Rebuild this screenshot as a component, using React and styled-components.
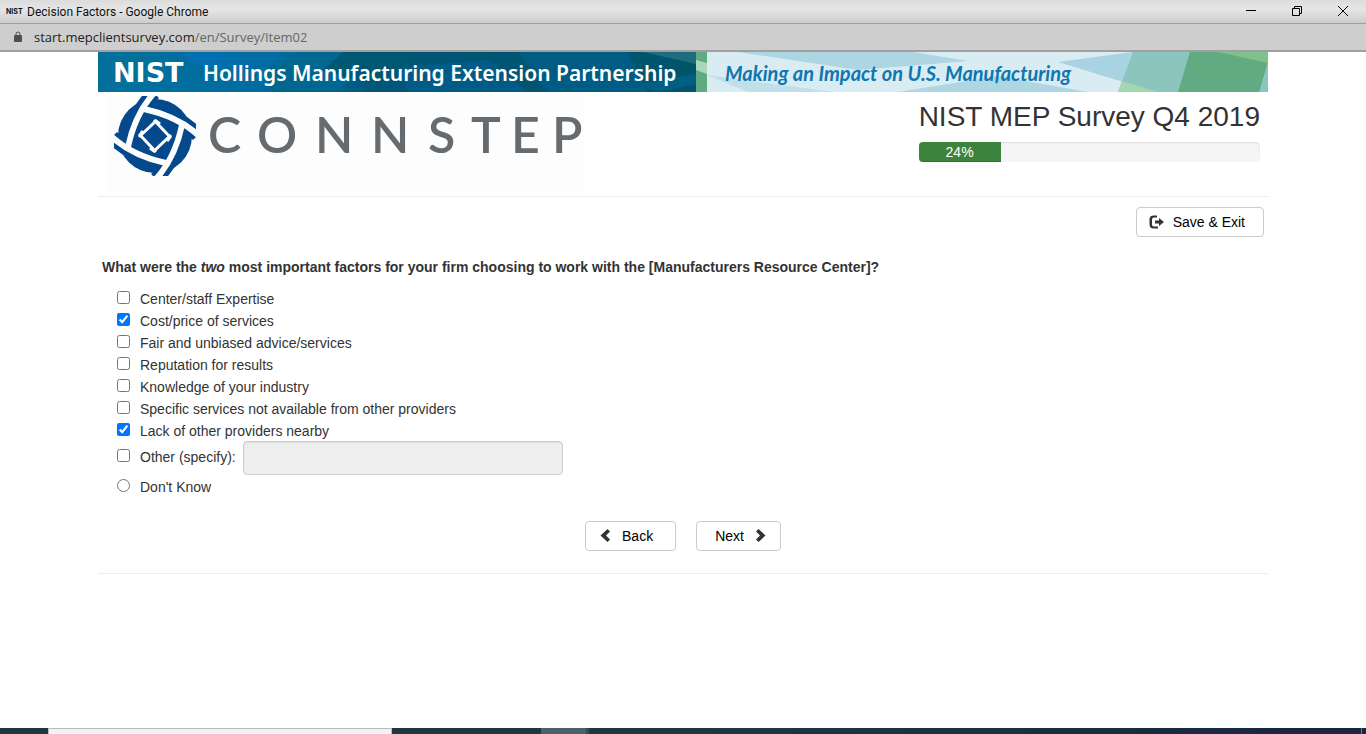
import { useState } from "react";
import styled, { createGlobalStyle } from "styled-components";

const GlobalStyle = createGlobalStyle`
  * {
    box-sizing: border-box;
  }

  body {
    margin: 0;
    background-color: #fff;
    color: #333;
    font-family: "Liberation Sans", Arial, sans-serif;
    font-size: 14px;
    line-height: 20px;
  }
`;

const Window = styled.div`
  min-height: 100vh;
  display: flex;
  flex-direction: column;
`;

const TitleBar = styled.header`
  display: flex;
  align-items: center;
  height: 24px;
  padding: 0 17px 0 6px;
  background: linear-gradient(#dcdcdc, #e6e6e6 40%, #cbcccd);
  border-bottom: 1px solid #9d9d9d;
  color: #111;
  font-family: "Roboto", "Noto Sans", sans-serif;
  font-size: 12px;
`;

const Favicon = styled.span`
  width: 21px;
  font-family: "Inter", sans-serif;
  font-size: 7px;
  font-weight: 700;
`;

const WindowControls = styled.div`
  display: flex;
  gap: 34px;
  margin-left: auto;
`;

const ControlButton = styled.button`
  display: flex;
  padding: 0;
  border: none;
  background: none;
`;

const AddressBar = styled.div`
  display: flex;
  align-items: center;
  gap: 11px;
  height: 28px;
  padding: 0 13px;
  background-color: #cecece;
  border-bottom: 2px solid #a0a0a0;
  color: #222;
  font-family: "Open Sans", "Noto Sans", sans-serif;
  font-size: 13px;
`;

const Path = styled.span`
  color: #666;
`;

const Page = styled.main`
  flex: 1;
  width: 100%;
  max-width: 1170px;
  margin: 0 auto;
`;

const Banner = styled.div`
  display: grid;
  height: 40px;

  & > * {
    grid-area: 1 / 1;
  }
`;

const BannerArt = styled.svg`
  width: 100%;
  height: 40px;
`;

const BannerText = styled.div`
  display: flex;
  align-items: center;
  height: 42px;
  padding-left: 15px;
  color: #fff;
  white-space: nowrap;
`;

const NistMark = styled.strong`
  width: 90px;
  font-family: "DejaVu Sans", sans-serif;
  font-size: 27px;
`;

const Program = styled.span`
  width: 522px;
  font-family: "Noto Sans", "Open Sans", sans-serif;
  font-size: 21px;
  font-weight: 600;
`;

const Slogan = styled.em`
  color: #0e76b0;
  font-family: "Lato", sans-serif;
  font-size: 20px;
  font-weight: 700;
`;

const Header = styled.div`
  display: flex;
  justify-content: space-between;
  align-items: flex-start;
  padding: 4px 8px;
  border-bottom: 1px solid #eee;
`;

const Logo = styled.svg`
  display: block;
  background-color: #fdfdfd;
`;

const Summary = styled.div`
  padding-top: 5px;
`;

const Title = styled.h1`
  margin: 0 0 9px;
  font-size: 28px;
  font-weight: 400;
  line-height: 32px;
`;

const Progress = styled.div`
  height: 20px;
  overflow: hidden;
  border-radius: 4px;
  background-color: #f5f5f5;
  box-shadow: inset 0 1px 2px rgba(0, 0, 0, 0.1);
`;

const ProgressBar = styled.div`
  height: 100%;
  background-color: #3c833e;
  box-shadow: inset 0 -1px 0 rgba(0, 0, 0, 0.15);
  color: #fff;
  text-align: center;
`;

const Toolbar = styled.div`
  display: flex;
  justify-content: flex-end;
  padding: 10px 4px 20px;
`;

const Button = styled.button`
  display: flex;
  align-items: center;
  gap: ${(props) => props.$gap || 12}px;
  height: 30px;
  padding: ${(props) => props.$padding};
  border: 1px solid #ccc;
  border-radius: 4px;
  background-color: #fff;
  color: #000;
  font-family: inherit;
  font-size: 14px;
  line-height: 20px;

  svg {
    fill: #333;
  }
`;

const Question = styled.fieldset`
  margin: 0;
  padding: 0 4px;
  border: none;
`;

const Legend = styled.legend`
  padding: 0;
  margin-bottom: 10px;
  font-weight: 700;
`;

const Options = styled.div`
  padding-left: 15px;
`;

const Option = styled.label`
  display: flex;
  align-items: flex-start;
  gap: 10px;
  line-height: 22px;
  padding-top: 1px;
  margin-bottom: -1px;

  input {
    width: 13px;
    height: 13px;
    margin: 3px 0 0;
  }
`;

const OtherRow = styled.div`
  display: flex;
  align-items: flex-start;
  gap: 7px;

  ${Option} {
    margin-top: 4px;
  }
`;

const TextInput = styled.input`
  width: 320px;
  height: 34px;
  padding: 6px 12px;
  border: 1px solid #ccc;
  border-radius: 4px;
  background-color: #eee;
  box-shadow: inset 0 1px 1px rgba(0, 0, 0, 0.075);
  font: inherit;
`;

const Pager = styled.div`
  display: flex;
  justify-content: center;
  gap: 20px;
  padding: 24px 0 22px;
  border-bottom: 1px solid #eee;
`;

const Taskbar = styled.footer`
  display: flex;
  height: 6px;
  padding-left: 48px;
  background: linear-gradient(90deg, #20373f 50%, #1a2640 95%);
`;

const SearchBox = styled.div`
  width: 344px;
  margin-right: 149px;
  border: 1px solid #bbb;
  border-bottom: none;
  background-color: #f2f2f2;
`;

const ActiveTask = styled.div`
  width: 48px;
  background-color: #4e5f67;
  border-right: 3px solid #3a4a52;
`;

const ShowDesktop = styled.div`
  width: 5px;
  margin-left: auto;
  border-left: 1px solid #6d7888;
`;

const factors = [
  "Center/staff Expertise",
  "Cost/price of services",
  "Fair and unbiased advice/services",
  "Reputation for results",
  "Knowledge of your industry",
  "Specific services not available from other providers",
  "Lack of other providers nearby",
];

function BannerBackground() {
  return (
    <BannerArt viewBox="0 0 1170 40" preserveAspectRatio="none" aria-hidden>
      <defs>
        <linearGradient id="deep">
          <stop offset="0" stopColor="#04709a" />
          <stop offset="0.25" stopColor="#006da0" />
          <stop offset="0.5" stopColor="#005578" />
          <stop offset="1" stopColor="#00546a" />
        </linearGradient>
        <linearGradient id="glow">
          <stop offset="0" stopColor="#0071b5" />
          <stop offset="1" stopColor="#006a9c" />
        </linearGradient>
      </defs>
      <rect width="598" height="40" fill="url(#deep)" />
      <path d="M85 0H200L150 25 95 12z" fill="url(#glow)" />
      <path d="M205 0H300L235 40H175L165 18z" fill="#006791" />
      <path d="M245 0H330L265 40H300L225 18z" fill="#005772" />
      <path d="M300 15L390 8 430 40H310z" fill="#005c86" />
      <path d="M420 0H530L550 40H450z" fill="#005b85" />
      <path d="M545 0H598V12z" fill="#1f6c80" />
      <path d="M540 32L598 22V32L560 40z" fill="#006084" />
      <rect x="598" width="11" height="40" fill="#5faa82" />
      <path d="M598 8L609 11V22L598 18z" fill="#a9d8b9" />
      <rect x="609" width="561" height="40" fill="#d9ecf2" />
      <path d="M640 0H815L870 9 760 18z" fill="#aed5e2" />
      <path d="M609 23L735 40H650z" fill="#c1dfe9" />
      <path d="M800 40L900 24 990 40z" fill="#afd6e3" />
      <path d="M960 10L1035 0V33z" fill="#a9d2e2" />
      <path d="M1035 0H1095L1081 40H1020z" fill="#8cc5bd" />
      <path d="M1024 29L1060 40H1020z" fill="#a4d6b4" />
      <path d="M1092 0H1170V12L1162 40H1080z" fill="#61aa82" />
      <path d="M1120 0H1170V11z" fill="#7fc08d" />
      <path d="M1170 10V40H1161z" fill="#8cc5bd" />
    </BannerArt>
  );
}

function ConnstepLogo() {
  const turns = [0, 90, 180, 270];
  return (
    <Logo width="479" height="96" viewBox="0 0 479 96">
      <svg x="8" width="82" height="80" viewBox="-41 -40 82 80">
        <circle r="37" fill="#04498c" />
        {turns.map((turn) => (
          <path
            key={turn}
            d="M-1 -43Q-12 -32 -19 -18"
            transform={`rotate(${turn})`}
            fill="none"
            stroke="#04498c"
            strokeWidth="14"
          />
        ))}
        {turns.map((turn) => (
          <g
            key={turn}
            transform={`rotate(${turn})`}
            fill="none"
            stroke="#fdfdfd"
          >
            <path d="M-1 -43Q-20 -22 -27 11" strokeWidth="6" />
            <path d="M-16 1L1 -15L5 -12" strokeWidth="3" />
          </g>
        ))}
      </svg>
      <text
        x="102 151 209 265 322 365 405 446"
        y="57"
        fill="#666b6f"
        fontFamily="Lato, sans-serif"
        fontSize="50"
        fontWeight="600"
      >
        CONNSTEP
      </text>
    </Logo>
  );
}

function App() {
  const [checked, setChecked] = useState([1, 6]);
  const [other, setOther] = useState(false);
  const percent = 24;

  function toggle(index) {
    setChecked((current) =>
      current.includes(index)
        ? current.filter((item) => item !== index)
        : [...current, index]
    );
  }

  return (
    <>
      <GlobalStyle />
      <Window>
        <TitleBar>
          <Favicon>NIST</Favicon>
          <span>Decision Factors - Google Chrome</span>
          <WindowControls>
            <ControlButton aria-label="Minimize">
              <svg width="12" height="14" stroke="#000">
                <path d="M1 5.5H11" />
              </svg>
            </ControlButton>
            <ControlButton aria-label="Restore">
              <svg width="12" height="14" stroke="#000" fill="none">
                <path d="M1.5 3.5H8.5V10.5H1.5zM3.5 3.5V1.5H10.5V8.5H8.5" />
              </svg>
            </ControlButton>
            <ControlButton aria-label="Close">
              <svg width="12" height="14" stroke="#000">
                <path d="M1 1L11 11M11 1L1 11" />
              </svg>
            </ControlButton>
          </WindowControls>
        </TitleBar>
        <AddressBar>
          <svg width="10" height="12" viewBox="0 0 10 12">
            <rect x="1" y="4" width="8" height="7" rx="1" fill="#4d4f52" />
            <path d="M3 5V3a2 2 0 0 1 4 0V5" fill="none" stroke="#4d4f52" />
          </svg>
          <span>
            start.mepclientsurvey.com<Path>/en/Survey/Item02</Path>
          </span>
        </AddressBar>

        <Page>
          <Banner>
            <BannerBackground />
            <BannerText>
              <NistMark>NIST</NistMark>
              <Program>Hollings Manufacturing Extension Partnership</Program>
              <Slogan>Making an Impact on U.S. Manufacturing</Slogan>
            </BannerText>
          </Banner>

          <Header>
            <ConnstepLogo />
            <Summary>
              <Title>NIST MEP Survey Q4 2019</Title>
              <Progress>
                <ProgressBar style={{ width: `${percent}%` }}>
                  {percent}%
                </ProgressBar>
              </Progress>
            </Summary>
          </Header>

          <Toolbar>
            <Button $gap={8} $padding="0 18px 0 12px">
              <svg width="16" height="14" viewBox="0 0 16 14">
                <path d="M8 0.5H4.5A4 4 0 0 0 0.5 4.5V9.5A4 4 0 0 0 4.5 13.5H9V11.5H5A2 2 0 0 1 3 9.5V4.5A2 2 0 0 1 5 2.5H8z" />
                <path d="M10 3L15 7L10 11V8.5H6V5.5H10z" />
              </svg>
              Save &amp; Exit
            </Button>
          </Toolbar>

          <Question>
            <Legend>
              What were the <em>two</em> most important factors for your firm
              choosing to work with the [Manufacturers Resource Center]?
            </Legend>
            <Options>
              {factors.map((factor, index) => (
                <Option key={factor}>
                  <input
                    type="checkbox"
                    checked={checked.includes(index)}
                    onChange={() => toggle(index)}
                  />
                  {factor}
                </Option>
              ))}
              <OtherRow>
                <Option>
                  <input
                    type="checkbox"
                    checked={other}
                    onChange={() => setOther(!other)}
                  />
                  Other (specify):
                </Option>
                <TextInput aria-label="Other factor" disabled={!other} />
              </OtherRow>
              <Option>
                <input type="radio" name="dontKnow" />
                Don't Know
              </Option>
            </Options>
          </Question>

          <Pager>
            <Button $padding="0 22px 0 14px">
              <svg width="10" height="15" viewBox="0 0 10 15">
                <path d="M7.5 0L10 2.5L6 6.5L10 10.5L7.5 13L0.5 6.5z" />
              </svg>
              Back
            </Button>
            <Button $padding="0 14px 0 18px">
              Next
              <svg width="10" height="15" viewBox="0 0 10 15">
                <path d="M2.5 0L0 2.5L4 6.5L0 10.5L2.5 13L9.5 6.5z" />
              </svg>
            </Button>
          </Pager>
        </Page>

        <Taskbar>
          <SearchBox />
          <ActiveTask />
          <ShowDesktop />
        </Taskbar>
      </Window>
    </>
  );
}

export default App;
